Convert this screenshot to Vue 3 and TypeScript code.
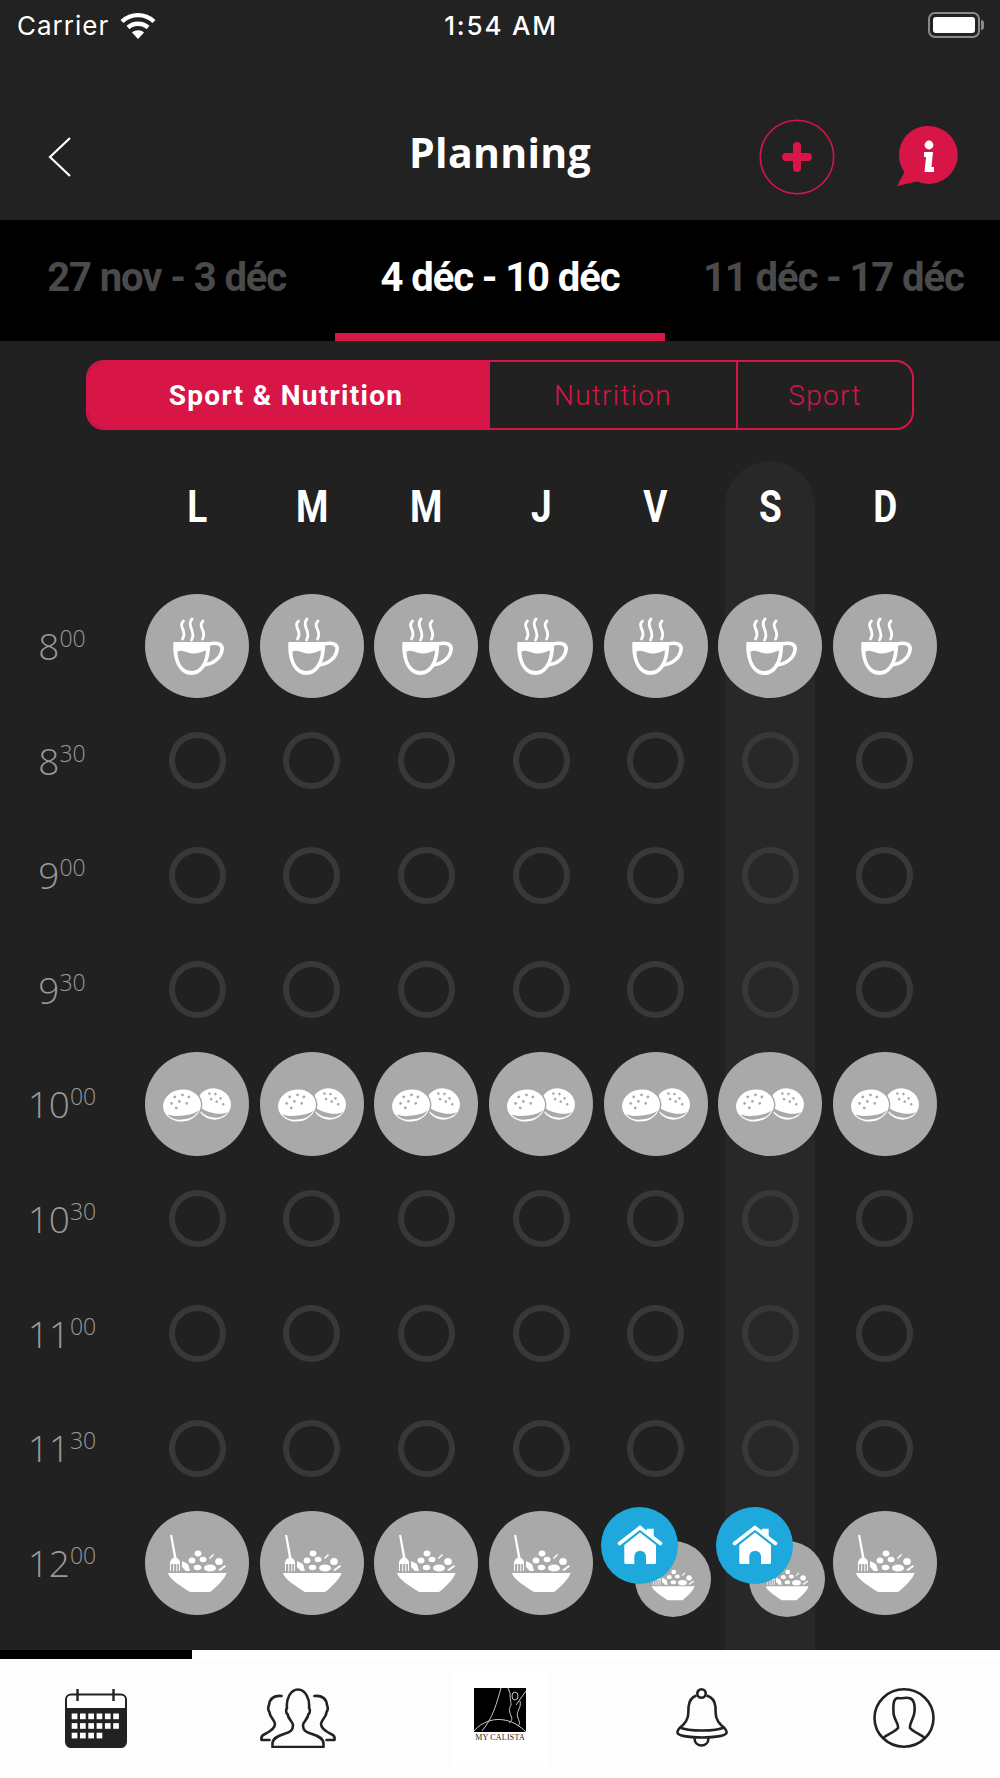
<template>
  <div class="screen">
    <!-- shared icons -->
    <svg class="sprites" width="0" height="0">
      <symbol id="cup" viewBox="0 0 104 104">
        <path fill="#fff" fill-rule="evenodd" d="M28.500 48H65C66 64 60 81 46.500 81C33 81 27 64 28.500 48ZM32.500 57.500C38 54.500 44 60.500 50 59.500C54 59 58 57.500 61 56.500C60.500 66 56 77 46.500 77C37 77 32.500 67 32.500 57.500Z" />
        <path fill="none" stroke="#fff" stroke-width="3.600" d="M64 50C72 48 78 50 77 56C76 64 68 70 59 71" />
        <path fill="none" stroke="#fff" stroke-width="2.800" stroke-linecap="round" d="M38.500 27C32.500 33 43 37 37.500 45M47 25C41 32 52 38 46.500 46M58 27C52 33 62.500 37 57.500 45" />
      </symbol>
      <symbol id="cookie" viewBox="0 0 104 104">
        <g transform="rotate(14 69 52)">
          <ellipse cx="69" cy="52" rx="17" ry="15.500" fill="#fff" />
          <path d="M54 57C60 62 78 63 85 56C81 63 76 65.500 69 65.500C62 65.500 57 63 54 57Z" fill="#a9a9a9" />
          <g fill="#a9a9a9"><circle cx="62" cy="43" r="1.300" /><circle cx="68" cy="42" r="1.300" /><circle cx="74" cy="45" r="1.300" /><circle cx="65" cy="48" r="1.300" /><circle cx="71" cy="49" r="1.300" /><circle cx="78" cy="50" r="1.300" /></g>
        </g>
        <g transform="rotate(-8 37 53.500)">
          <ellipse cx="37" cy="53.500" rx="20.500" ry="17.500" fill="#a9a9a9" />
          <ellipse cx="37" cy="53.500" rx="19" ry="16" fill="#fff" />
          <path d="M21 60C28 64.500 46 65 53 60.500C49 66 44 67.500 37 67.500C30 67.500 25 65.500 21 60Z" fill="#a9a9a9" />
          <g fill="#a9a9a9"><circle cx="31" cy="44" r="1.400" /><circle cx="39" cy="43" r="1.400" /><circle cx="45" cy="46" r="1.400" /><circle cx="27" cy="50" r="1.400" /><circle cx="35" cy="49" r="1.400" /><circle cx="42" cy="52" r="1.400" /><circle cx="31" cy="55" r="1.400" /></g>
        </g>
      </symbol>
      <symbol id="bowl" viewBox="0 0 104 104">
        <path fill="#fff" d="M23 62H81.500C81 66 72 76 65 81H45C37 76 24 68 23 62Z" />
        <path fill="#fff" d="M25 24L27.200 24L31.500 47H29ZM25 51C26 48 28 46.500 30 46.500C32 46.500 34.500 48 35 51V53H25Z" />
        <path stroke="#fff" stroke-width="1" d="M25.500 52V60M28.700 52V60.500M31.800 52V60.500M34.500 52V60" />
        <g fill="#fff">
          <ellipse cx="53" cy="42.500" rx="3.400" ry="3" />
          <ellipse cx="47" cy="49.500" rx="3.400" ry="2.900" />
          <ellipse cx="58" cy="48.500" rx="3.400" ry="2.800" />
          <ellipse cx="74" cy="50.500" rx="3.800" ry="3.600" />
          <ellipse cx="52.500" cy="56.500" rx="3.800" ry="2.800" />
          <ellipse cx="65" cy="57" rx="6" ry="3.600" />
          <path d="M37 50L43 53L45 60H41L37 56Z" />
          <path d="M64 47L68 43L69 44L65 48Z" />
          <path d="M73 59L80 54L81 55.500L75 60Z" />
        </g>
      </symbol>
    </svg>

    <header class="top">
      <div class="status">
        <div class="status__left">
          <span>Carrier</span>
          <svg width="36" height="27" viewBox="0 0 36 27">
            <path fill="none" stroke="#fff" stroke-width="4.400" d="M2 9.500C11 1 25 1 34 9.500M8 15.500C13.500 10.500 22.500 10.500 28 15.500" />
            <path fill="#fff" d="M12 20.500C15 17.500 21 17.500 24 20.500L18 27Z" />
          </svg>
        </div>
        <div class="status__time">1:54 AM</div>
        <div class="battery"><span class="battery__fill"></span></div>
      </div>

      <nav class="nav">
        <svg class="nav__back" width="24" height="40" viewBox="0 0 24 40">
          <path fill="none" stroke="#fff" stroke-width="2.200" d="M22 1L2 20L22 39" />
        </svg>
        <h1 class="nav__title">Planning</h1>
        <div class="nav__actions">
          <svg width="76" height="76" viewBox="0 0 76 76">
            <circle cx="38" cy="38" r="36.700" fill="none" stroke="#d81547" stroke-width="1.600" />
            <path stroke="#d81547" stroke-width="8" stroke-linecap="round" d="M38 27V49M27 38H49" />
          </svg>
          <svg width="62" height="62" viewBox="0 0 62 62">
            <path fill="#d81547" d="M32 0A29 29 0 1 1 20 55.500L0 60L7.500 46A29 29 0 0 1 32 0Z" />
            <circle cx="32" cy="19" r="4.400" fill="#fff" />
            <path fill="#fff" d="M27 26H36L34.500 41H37V46H27.500L29 31H27Z" />
          </svg>
        </div>
      </nav>
    </header>

    <div class="weeks">
      <div v-for="w in weeks" :key="w.label" class="weeks__item" :class="{ active: w.active }">{{ w.label }}</div>
    </div>

    <div class="filter">
      <div class="filter__item filter__item--all active">Sport &amp; Nutrition</div>
      <div class="filter__item filter__item--nutrition">Nutrition</div>
      <div class="filter__item filter__item--sport">Sport</div>
    </div>

    <main class="schedule">
      <div class="saturday"></div>
      <div v-for="(d, i) in days" :key="i" class="day" :style="{ gridColumn: i + 2 }">{{ d }}</div>

      <template v-for="(row, r) in rows" :key="r">
        <div class="hour" :style="{ gridRow: r + 2 }">{{ row.hour }}<sup>{{ row.minutes }}</sup></div>
        <div v-for="(d, i) in days" :key="i" class="cell" :style="{ gridColumn: i + 2, gridRow: r + 2 }">
          <span v-if="row.meal === 'none'" class="ring"></span>
          <template v-else-if="row.meal === 'bowl' && (i === 4 || i === 5)">
            <span class="meal meal--small"><svg width="76" height="76"><use href="#bowl" /></svg></span>
            <span class="home">
              <svg width="77" height="77" viewBox="0 0 77 77">
                <path fill="#fff" d="M46 21.700H52.700V30L46 26Z" />
                <path fill="#fff" d="M39 25.500L55 38V55.500Q55 57 53.500 57H45V49.500A5.800 5.800 0 0 0 33.300 49.500V57H25Q23.300 57 23.300 55.500V38Z" />
                <path fill="none" stroke="#fff" stroke-width="3.600" stroke-linecap="round" d="M18.500 36.500L39 20.500L59.500 36.500" />
              </svg>
            </span>
          </template>
          <span v-else class="meal"><svg width="104" height="104"><use :href="'#' + row.meal" /></svg></span>
        </div>
      </template>
    </main>

    <footer class="tabbar">
      <div class="tabbar__progress"><span></span></div>
      <div class="tabbar__icons">
        <svg width="62" height="60" viewBox="0 0 62 60">
          <rect x="1" y="6.500" width="60" height="52.500" rx="5" fill="#fff" stroke="#222" stroke-width="2" />
          <path fill="#222" d="M1 20H61V54Q61 60 55 60H7Q1 60 1 54Z" />
          <path stroke="#222" stroke-width="2.400" d="M12.500 1V13M48.500 1V13" />
          <g fill="#fff">
            <rect v-for="s in calendarSquares" :key="s.x + '-' + s.y" :x="s.x" :y="s.y" width="5.700" height="5.700" />
          </g>
        </svg>
        <svg width="76" height="60" viewBox="0 0 76 60">
          <g fill="none" stroke="#222" stroke-width="2.600" stroke-linejoin="round" stroke-linecap="round">
            <path d="M12.500 59V55C13 50 18 48 24 46C31 44 33 42 33 37C33 34 28 31 27.500 26C25.500 25 26 21 27 20C26 12 30 1.500 38 1.500C46 1.500 50 12 49 20C50 21 50.500 25 48.500 26C48 31 43 34 43 37C43 42 45 44 52 46C58 48 63 50 63.500 55V59Z" />
            <path d="M21.500 8C14 7 9.500 11 9 17C8.500 19 7 21 9.500 24C9.500 29 15 32 15 36C15 41 9 44 5 46C2 47 1 49 1.500 52H9.500" />
            <path d="M54.500 8C62 7 66.500 11 67 17C67.500 19 69 21 66.500 24C66.500 29 61 32 61 36C61 41 67 44 71 46C74 47 75 49 74.500 52H66.500" />
          </g>
        </svg>
        <div class="logo">
          <svg width="52" height="44" viewBox="0 0 52 44">
            <rect width="52" height="44" fill="#000" />
            <g fill="none" stroke="#ddd" stroke-width=".9">
              <path d="M27 0C23 14 19 30 8 43" />
              <path d="M0 43C8 33 22 30 30 32C38 33 46 38 52 44" />
              <path d="M36 5C36 12 37 13 37 17C34 22 36 24 37 28C39 31 37 34 35 35M46 13C48 20 41 24 44 30C46 35 46 36 44 38" />
              <path d="M52 3L42 17M36 5L34 0" />
              <ellipse cx="41" cy="8" rx="3" ry="4" />
            </g>
          </svg>
          <span class="logo__text">MY CALISTA</span>
        </div>
        <svg width="52" height="60" viewBox="0 0 52 60">
          <g fill="none" stroke="#222" stroke-width="2.600">
            <circle cx="25.500" cy="5.500" r="4.200" />
            <path d="M20.500 7.500C16 9 13 13 12.500 19C12.500 28 12 32 7 37C3 40 1 43 1.500 45C3 48 14 49.500 26 49.500C38 49.500 49 48 50.500 45C51 43 49 40 45 37C40 32 39.500 28 39.500 19C39 13 36 9 30.500 7.500" />
            <path d="M4 39.500C12 43.500 40 43.500 48 39.500" />
            <path d="M18.500 50C18.500 60 32.500 60 32.500 50" />
          </g>
        </svg>
        <svg width="62" height="60" viewBox="0 0 62 60">
          <g fill="none" stroke="#222" stroke-width="2.600">
            <ellipse cx="31" cy="30" rx="29.500" ry="28.700" />
            <path d="M10 50C15 46 22 44 25 40C26 36 20 30 20.500 24C20 15 21 10 25 10C30 11 32 9 36 10C42 11 42 18 41.500 24C41 30 36 36 37 40C40 44 47 46 52 50" />
          </g>
        </svg>
      </div>
    </footer>
  </div>
</template>

<script setup lang="ts">
type Meal = 'none' | 'cup' | 'cookie' | 'bowl'

interface Row {
  hour: number
  minutes: string
  meal: Meal
}

const weeks = [
  { label: '27 nov - 3 déc', active: false },
  { label: '4 déc - 10 déc', active: true },
  { label: '11 déc - 17 déc', active: false },
]

const days: string[] = ['L', 'M', 'M', 'J', 'V', 'S', 'D']

const rows: Row[] = [
  { hour: 8, minutes: '00', meal: 'cup' },
  { hour: 8, minutes: '30', meal: 'none' },
  { hour: 9, minutes: '00', meal: 'none' },
  { hour: 9, minutes: '30', meal: 'none' },
  { hour: 10, minutes: '00', meal: 'cookie' },
  { hour: 10, minutes: '30', meal: 'none' },
  { hour: 11, minutes: '00', meal: 'none' },
  { hour: 11, minutes: '30', meal: 'none' },
  { hour: 12, minutes: '00', meal: 'bowl' },
]

const calendarSquares: { x: number; y: number }[] = []
for (let r = 0; r < 3; r++) {
  for (let c = 0; c < (r === 2 ? 4 : 6); c++) {
    calendarSquares.push({ x: 6.7 + c * 8.3, y: 25.5 + r * 9.6 })
  }
}
</script>

<style scoped>
.screen {
  width: 1000px;
  height: 1778px;
  overflow: hidden;
  display: flex;
  flex-direction: column;
  background: #212121;
  color: #fff;
  font-family: "Roboto", "Liberation Sans", sans-serif;
}

.sprites {
  position: absolute;
}

.top {
  height: 220px;
  flex: none;
  background: #222;
}

.status {
  height: 50px;
  padding: 0 15px 0 17px;
  display: grid;
  grid-template-columns: 1fr auto 1fr;
  align-items: center;
  font-family: "Inter", sans-serif;
  font-size: 26px;
}

.status__left {
  display: flex;
  align-items: center;
  gap: 11px;
  letter-spacing: 1px;
}

.status__time {
  font-weight: 500;
  letter-spacing: 1.8px;
}

.battery {
  width: 52px;
  height: 26px;
  margin-right: 5px;
  justify-self: end;
  padding: 3px;
  box-sizing: border-box;
  border: 2px solid #8a8a8a;
  border-radius: 7px;
  position: relative;
}

.battery::after {
  content: "";
  position: absolute;
  right: -6px;
  top: 6px;
  width: 3px;
  height: 10px;
  background: #8a8a8a;
  border-radius: 0 3px 3px 0;
}

.battery__fill {
  display: block;
  height: 100%;
  background: #fff;
  border-radius: 3px;
}

.nav {
  height: 170px;
  padding: 44px 40px 0;
  box-sizing: border-box;
  display: grid;
  grid-template-columns: 1fr auto 1fr;
  align-items: center;
}

.nav__back {
  margin-left: 8px;
}

.nav__title {
  margin: -10px 0 0;
  font-family: "Open Sans", sans-serif;
  font-size: 41px;
  font-weight: 700;
  letter-spacing: 0.3px;
}

.nav__actions {
  display: flex;
  justify-content: flex-end;
  align-items: center;
  gap: 62px;
  padding-right: 1px;
}

.weeks {
  height: 121px;
  flex: none;
  display: grid;
  grid-template-columns: repeat(3, 1fr);
  background: #000;
}

.weeks__item {
  padding-top: 34px;
  box-sizing: border-box;
  text-align: center;
  font-size: 40px;
  font-weight: 700;
  letter-spacing: -1.1px;
  color: #4a4a4a;
}

.weeks__item.active {
  margin: 0 2px;
  color: #fff;
  border-bottom: 8px solid #d81547;
}

.filter {
  width: 828px;
  height: 70px;
  flex: none;
  margin: 19px 0 0 86px;
  box-sizing: border-box;
  display: flex;
  border: 2px solid #d81547;
  border-radius: 18px;
  overflow: hidden;
  font-size: 28px;
  font-weight: 300;
  letter-spacing: 1.300px;
  color: #d81547;
}

.filter__item {
  display: flex;
  align-items: center;
  justify-content: center;
  box-sizing: border-box;
}

.filter__item--all {
  width: 400px;
  padding-right: 4px;
}

.filter__item--nutrition {
  width: 250px;
  border-left: 2px solid #d81547;
  border-right: 2px solid #d81547;
}

.filter__item--sport {
  flex: 1;
}

.filter__item.active {
  background: #d81547;
  color: #fff;
  font-weight: 700;
}

.schedule {
  flex: 1;
  min-height: 0;
  margin-top: 31px;
  overflow: hidden;
  display: grid;
  grid-template-columns: 140px repeat(7, 114.6px);
  grid-template-rows: 127.7px repeat(9, 114.6px) 1fr;
}

.saturday {
  grid-column: 7;
  grid-row: 1 / -1;
  justify-self: center;
  width: 90px;
  background: #282828;
  border-radius: 45px 45px 0 0;
}

.day {
  grid-row: 1;
  padding-top: 21px;
  text-align: center;
  font-size: 44px;
  font-weight: 700;
  line-height: 50px;
  transform: scaleX(0.84);
}

.hour {
  grid-column: 1;
  align-self: center;
  padding-right: 16px;
  text-align: center;
  font-family: "Open Sans", sans-serif;
  font-size: 37px;
  font-weight: 300;
  line-height: 50px;
  color: #9a9a9a;
}

.hour sup {
  font-size: 23px;
  line-height: 0;
  vertical-align: 13px;
}

.cell {
  position: relative;
  display: flex;
  align-items: center;
  justify-content: center;
}

.ring {
  width: 57px;
  height: 57px;
  box-sizing: border-box;
  border: 6.5px solid #383838;
  border-radius: 50%;
}

.meal {
  display: flex;
  flex: none;
  border-radius: 50%;
  background: #a9a9a9;
}

.meal--small {
  transform: translate(17px, 16px);
}

.home {
  position: absolute;
  left: calc(50% - 54.5px);
  top: calc(50% - 55.5px);
  display: flex;
  border-radius: 50%;
  background: #1fa8dc;
}

.tabbar {
  height: 128px;
  flex: none;
  background: #fdfdfd;
}

.tabbar__progress {
  height: 9px;
  background: #fff;
}

.tabbar__progress span {
  display: block;
  width: 192px;
  height: 100%;
  background: #000;
}

.tabbar__icons {
  padding-top: 29px;
  display: grid;
  grid-template-columns: repeat(5, 202px);
  justify-content: center;
  justify-items: center;
  align-items: start;
}

.logo {
  width: 95px;
  height: 94px;
  margin-top: -16px;
  padding-top: 16px;
  box-sizing: border-box;
  display: flex;
  flex-direction: column;
  align-items: center;
  background: #fff;
}

.logo__text {
  margin-top: 1px;
  font-family: "Liberation Serif", serif;
  font-size: 8px;
  line-height: 9px;
  letter-spacing: 0.2px;
  white-space: nowrap;
  color: #222;
}
</style>
